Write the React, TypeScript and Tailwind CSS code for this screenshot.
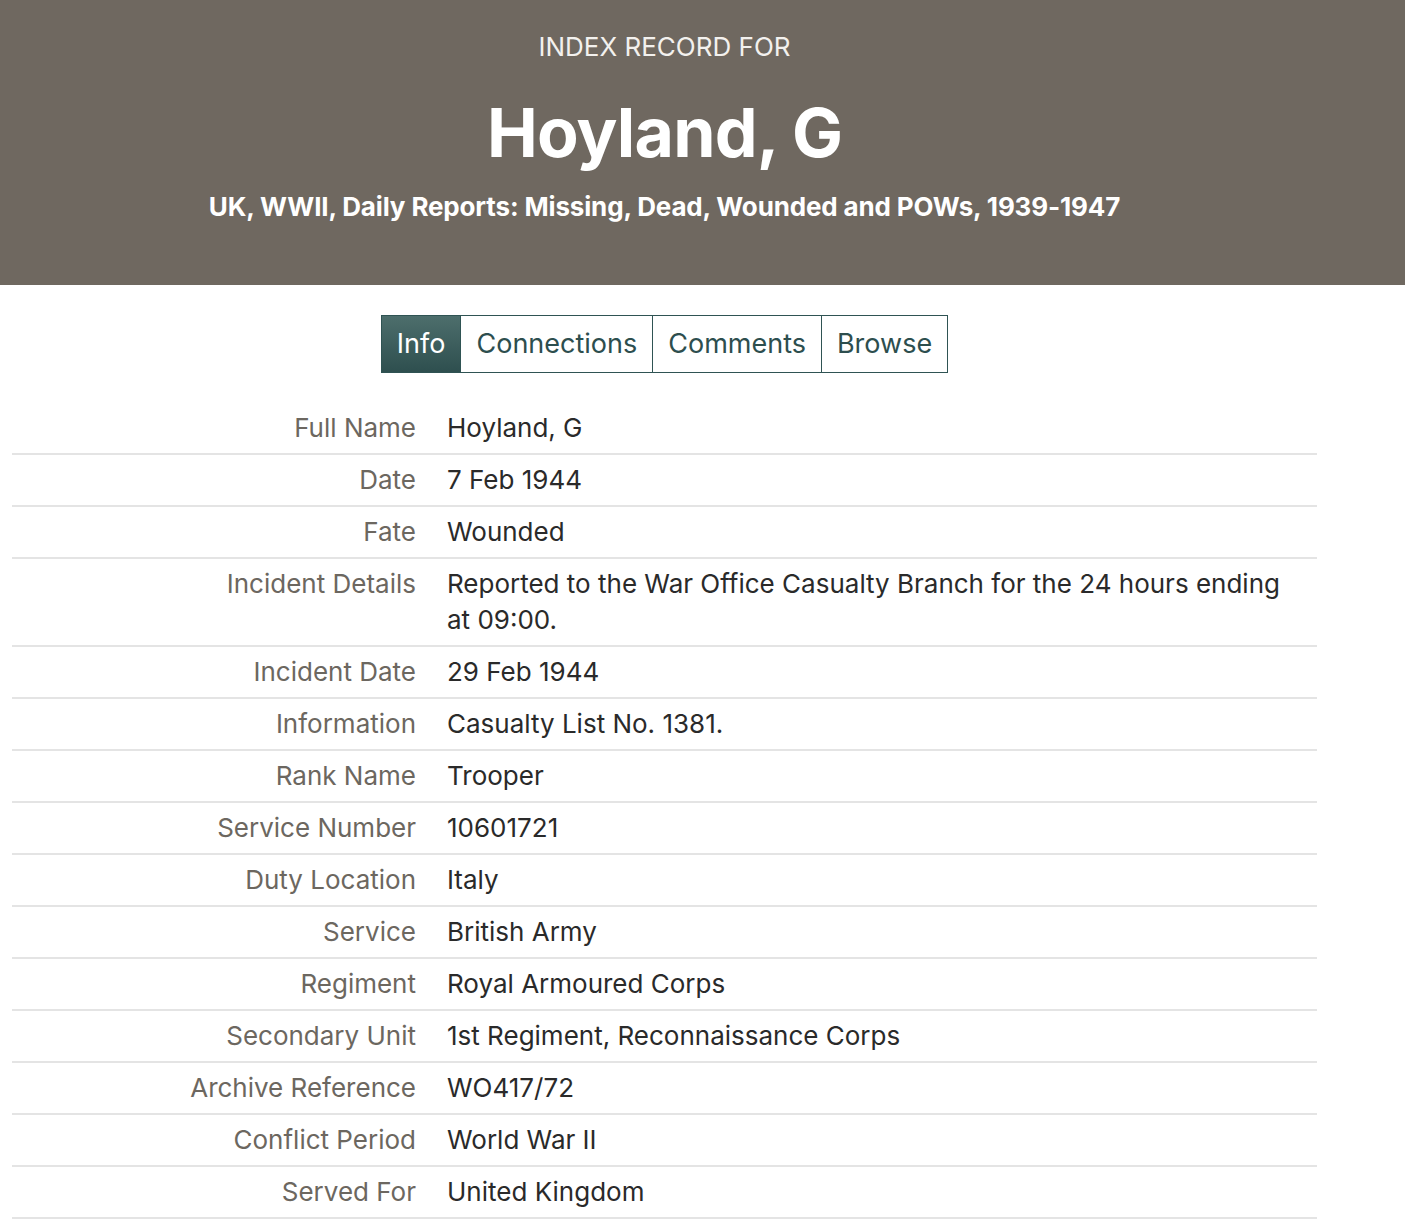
const fields: { label: string; value: string }[] = [
  { label: "Full Name", value: "Hoyland, G" },
  { label: "Date", value: "7 Feb 1944" },
  { label: "Fate", value: "Wounded" },
  {
    label: "Incident Details",
    value: "Reported to the War Office Casualty Branch for the 24 hours ending at 09:00.",
  },
  { label: "Incident Date", value: "29 Feb 1944" },
  { label: "Information", value: "Casualty List No. 1381." },
  { label: "Rank Name", value: "Trooper" },
  { label: "Service Number", value: "10601721" },
  { label: "Duty Location", value: "Italy" },
  { label: "Service", value: "British Army" },
  { label: "Regiment", value: "Royal Armoured Corps" },
  { label: "Secondary Unit", value: "1st Regiment, Reconnaissance Corps" },
  { label: "Archive Reference", value: "WO417/72" },
  { label: "Conflict Period", value: "World War II" },
  { label: "Served For", value: "United Kingdom" },
];

const tabs = ["Info", "Connections", "Comments", "Browse"];

function RecordHeader() {
  return (
    <div className="bg-[#6f6860] w-full h-[285px]">
      <div className="w-[1329px] flex flex-col items-center pt-[30px] text-white">
        <p className="text-[26px] leading-[34px] font-normal text-[#f3f1ee]">INDEX RECORD FOR</p>
        <h1 className="text-[68px] leading-[80px] font-bold mt-[28px] tracking-[-0.8px]">Hoyland, G</h1>
        <p className="text-[26px] leading-[34px] font-bold mt-[18px] tracking-[-0.15px]">
          UK, WWII, Daily Reports: Missing, Dead, Wounded and POWs, 1939-1947
        </p>
      </div>
    </div>
  );
}

function Tabs() {
  return (
    <div className="flex justify-center mt-[30px]">
      <div className="flex border border-[#2f5353] h-[58px]">
        {tabs.map((t, i) => (
          <div
            key={t}
            className={
              i === 0
                ? "flex items-center px-[15px] text-[27px] text-white bg-gradient-to-b from-[#4d6e6c] to-[#2e4f4f]"
                : "flex items-center px-[15px] text-[27px] text-[#2d4e4e] border-l border-[#2f5353]"
            }
          >
            {t}
          </div>
        ))}
      </div>
    </div>
  );
}

function FieldTable() {
  return (
    <div className="mt-[30px] ml-[12px] w-[1305px]">
      {fields.map((f) => (
        <div key={f.label} className="flex border-b-2 border-[#e4e4e4] py-[7px]">
          <div className="w-[419px] shrink-0 pr-[15px] text-right text-[#6c6760] text-[26px] leading-[36px]">
            {f.label}
          </div>
          <div className="pl-[16px] pr-[20px] text-[#2a2a2a] text-[26px] leading-[36px]">{f.value}</div>
        </div>
      ))}
    </div>
  );
}

export default function App() {
  return (
    <div className="bg-white min-h-[1225px] font-['Inter',sans-serif]">
      <RecordHeader />
      <div className="w-[1329px]">
        <Tabs />
        <FieldTable />
      </div>
    </div>
  );
}
